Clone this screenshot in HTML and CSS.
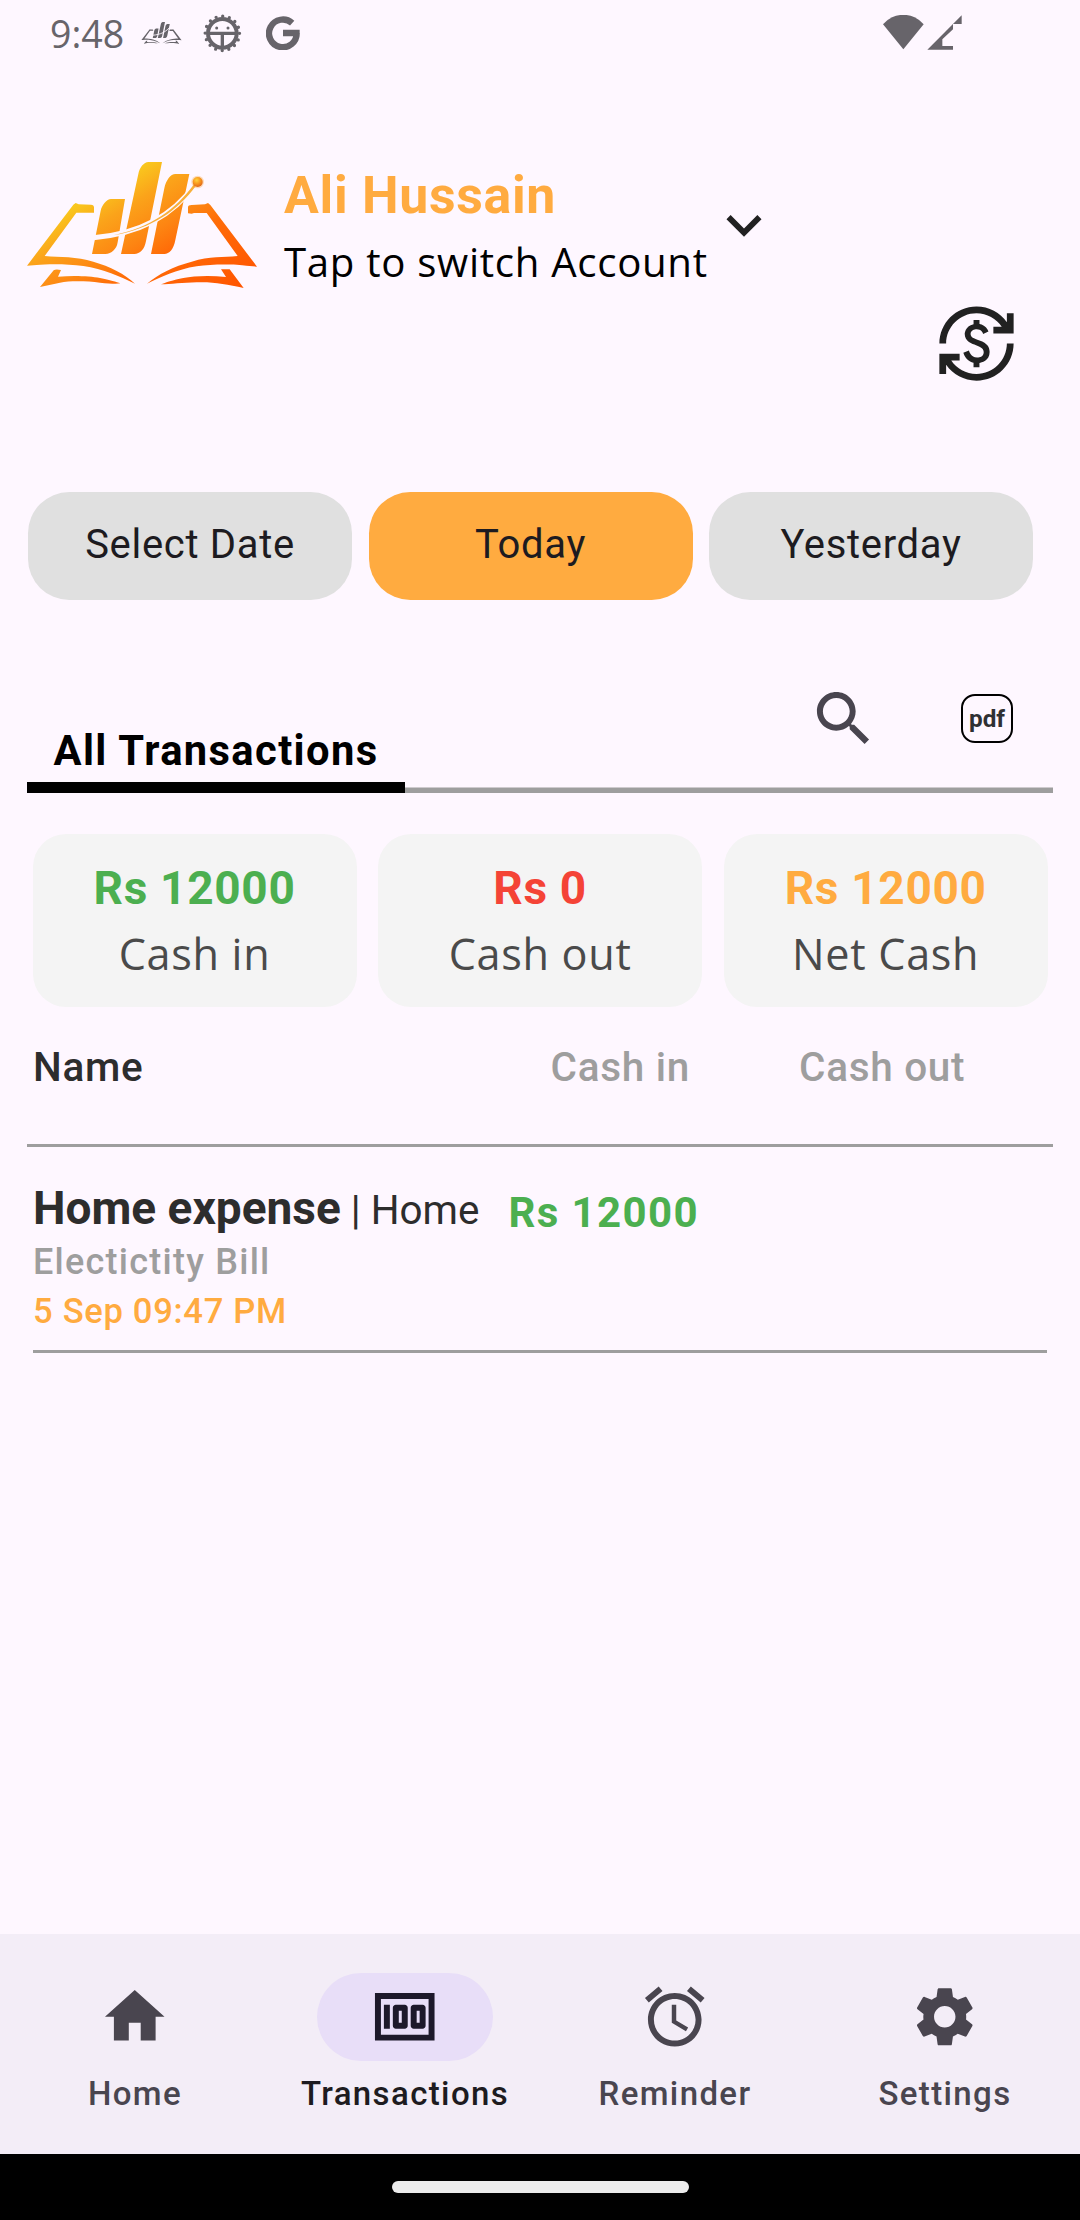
FILE: index.html
```
<!DOCTYPE html>
<html lang="en">
<head>
<meta charset="utf-8">
<title>Transactions</title>
<link rel="stylesheet" href="styles.css">
</head>
<body>
<svg class="defs" aria-hidden="true">
  <defs>
    <linearGradient id="flame" gradientUnits="userSpaceOnUse" x1="195" y1="180" x2="439" y2="587">
      <stop offset="0" stop-color="#f9c81e"/>
      <stop offset=".18" stop-color="#fba31a"/>
      <stop offset=".4" stop-color="#fd8512"/>
      <stop offset=".55" stop-color="#ff6c08"/>
      <stop offset="1" stop-color="#ff5400"/>
    </linearGradient>
    <radialGradient id="ball" cx=".4" cy=".32" r=".7">
      <stop offset="0" stop-color="#ffd23c"/>
      <stop offset=".5" stop-color="#f99a1c"/>
      <stop offset="1" stop-color="#e0641a"/>
    </radialGradient>
    <g id="book">
      <path d="M51 362 190 179l7-5 9 4 37 1q9 1 9 8v16h-53L104 333c46 4 96 1 146 17 50 14 95 37 125 66-45-21-95-45-155-53-50-7-110-6-140-3z"/>
      <path d="M741 365 601 180l-7-6-9 4-40 2q-11 0-11 7v18l11 1 7-2h38l93 129c-43 4-83 0-138 17-55 14-100 37-134 66 39-18 89-43 149-52 50-8 120-6 149-2z"/>
      <path d="m90 426 41-50q6-5 22-1l-9 20c46-4 96-2 126 4s50 12 61 16c-11 2-31 1-61-2-40-5-90-6-120 0z"/>
      <path d="m701 429-42-56h-26l15 23c-48-5-98-3-128 3s-55 14-67 19c27 0 67-5 107-6 50-2 90 6 141 17z"/>
      <path d="m246 327 26-130c4-17 18-35 31-35h42l-22 130c-3 20-18 35-37 35z"/>
      <path d="m333 327 52-240c3-19 17-36 30-36h41l-48 237c-4 24-18 39-35 39z"/>
      <path d="m423 327 40-197c5-25 19-43 33-43h42l-42 198c-5 27-18 42-33 42z"/>
    </g>
  </defs>
</svg>

<div class="screen">
  <div class="status">
    <span class="clock">9:48</span>
    <svg class="st-book" viewBox="51 51 690 378" fill="currentColor"><use href="#book"/><path class="cut" d="M250 278C370 268 480 225 555 118"/></svg>
    <svg class="st-bug" viewBox="0 0 116 116" fill="none" stroke="currentColor">
      <circle cx="58" cy="58" r="51.500" stroke-width="10" pathLength="160" stroke-dasharray="0 10" stroke-linecap="round"/>
      <circle cx="58" cy="58" r="43" stroke-width="12"/>
      <path d="M14 58h88M58 58v44" stroke-width="10"/>
      <circle cx="41" cy="42" r="4.500" fill="currentColor" stroke="none"/>
      <circle cx="75" cy="42" r="4.500" fill="currentColor" stroke="none"/>
    </svg>
    <svg class="st-g" viewBox="0 0 102 102" fill="none" stroke="currentColor" stroke-width="19">
      <path d="M78.500 21.500A41.500 41.500 0 1 0 92 51M51 51h50"/>
    </svg>
    <svg class="st-net" viewBox="0 0 236 105" fill="currentColor">
      <path d="M0 28a79.400 79.400 0 0 1 122 0L61 103z"/>
      <path d="M133 104 236 1v26h-26v16l-32 30v20h32v11z"/>
    </svg>
  </div>

  <header class="account">
    <svg class="logo" viewBox="0 0 810 480" fill="url(#flame)">
      <use href="#book"/>
      <path class="cut" d="M250 278C370 268 480 225 555 118"/>
      <path d="M310 271C425 246 495 195 552 118l6 4C500 199 430 248 310 271z" fill="#f8b03a"/>
      <circle cx="563" cy="111" r="19" fill="#f99a1c" opacity=".3"/>
      <circle cx="563" cy="111" r="15" fill="url(#ball)"/>
    </svg>
    <div class="who">
      <div class="who-name">Ali Hussain</div>
      <div class="who-hint">Tap to switch Account</div>
    </div>
    <svg class="chevron" viewBox="0 0 24 24"><path d="M7.410 8.590 12 13.170l4.590-4.580L18 10l-6 6-6-6z"/></svg>
  </header>

  <div class="currency">
    <svg viewBox="0 0 24 24"><path d="M12.890 11.100c-1.780-.59-2.640-.96-2.640-1.900 0-1.020 1.110-1.390 1.810-1.390 1.310 0 1.790.99 1.900 1.340l1.580-.67c-.15-.44-.82-1.910-2.660-2.230V5h-1.750v1.260c-2.600.56-2.620 2.850-2.620 2.960 0 2.270 2.250 2.910 3.350 3.310 1.580.56 2.280 1.070 2.280 2.030 0 1.130-1.050 1.610-1.980 1.610-1.820 0-2.340-1.870-2.400-2.090l-1.660.67c.63 2.190 2.280 2.780 3.020 2.960V19h1.750v-1.240c.52-.09 3.020-.59 3.020-3.220.010-1.390-.6-2.610-3-3.440zM3 21H1v-6h6v2H4.520c1.610 2.410 4.360 4 7.480 4 4.970 0 9-4.030 9-9h2c0 6.080-4.920 11-11 11-3.720 0-7.010-1.850-9-4.670V21zm-2-9C1 5.920 5.920 1 12 1c3.720 0 7.010 1.850 9 4.670V3h2v6h-6V7h2.480C17.870 4.590 15.120 3 12 3c-4.970 0-9 4.030-9 9H1z"/></svg>
  </div>

  <div class="filters">
    <div class="filter">Select Date</div>
    <div class="filter filter-on">Today</div>
    <div class="filter">Yesterday</div>
  </div>

  <div class="toolbar">
    <div class="tab">All Transactions</div>
    <svg class="search" viewBox="0 0 24 24"><path d="M15.500 14h-.79l-.28-.27C15.410 12.590 16 11.110 16 9.500 16 5.910 13.090 3 9.500 3S3 5.910 3 9.500 5.910 16 9.500 16c1.610 0 3.090-.59 4.230-1.570l.27.28v.79l5 4.990L20.490 19l-4.990-5zm-6 0C7.010 14 5 11.990 5 9.500S7.010 5 9.500 5 14 7.010 14 9.500 11.990 14 9.500 14z"/></svg>
    <div class="pdf">pdf</div>
  </div>

  <div class="cards">
    <div class="card"><div class="amount green">Rs 12000</div><div class="caption">Cash in</div></div>
    <div class="card"><div class="amount red">Rs 0</div><div class="caption">Cash out</div></div>
    <div class="card"><div class="amount orange">Rs 12000</div><div class="caption">Net Cash</div></div>
  </div>

  <div class="thead">
    <div class="th-name">Name</div><div>Cash in</div><div>Cash out</div>
  </div>

  <div class="entry">
    <div>
      <div class="entry-title">Home expense<span class="entry-cat"> | Home</span></div>
      <div class="entry-note">Electictity Bill</div>
      <div class="entry-date">5 Sep 09:47 PM</div>
    </div>
    <div class="entry-in green">Rs 12000</div>
  </div>

  <nav class="nav">
    <div class="nav-item">
      <div class="pill"><svg viewBox="0 0 24 24"><path d="M10 20v-6h4v6h5v-8h3L12 3 2 12h3v8z"/></svg></div>
      <div class="nav-label">Home</div>
    </div>
    <div class="nav-item nav-on">
      <div class="pill"><svg viewBox="0 0 24 24"><path d="M5 8h2v8H5zm7 0H9c-.55 0-1 .45-1 1v6c0 .55.45 1 1 1h3c.55 0 1-.45 1-1V9c0-.55-.45-1-1-1zm-1 6h-1v-4h1v4zm7-6h-3c-.55 0-1 .45-1 1v6c0 .55.45 1 1 1h3c.55 0 1-.45 1-1V9c0-.55-.45-1-1-1zm-1 6h-1v-4h1v4z"/><path d="M2 4v16h20V4H2zm2 14V6h16v12H4z"/></svg></div>
      <div class="nav-label">Transactions</div>
    </div>
    <div class="nav-item">
      <div class="pill"><svg viewBox="0 0 24 24"><path d="M22 5.720l-4.600-3.860-1.290 1.530 4.600 3.860L22 5.720zM7.880 3.390 6.600 1.860 2 5.710l1.290 1.530 4.590-3.850zM12.500 8H11v6l4.750 2.850.75-1.230-4-2.370V8zM12 4c-4.970 0-9 4.030-9 9s4.020 9 9 9c4.970 0 9-4.030 9-9s-4.030-9-9-9zm0 16c-3.870 0-7-3.130-7-7s3.130-7 7-7 7 3.130 7 7-3.130 7-7 7z"/></svg></div>
      <div class="nav-label">Reminder</div>
    </div>
    <div class="nav-item">
      <div class="pill"><svg viewBox="0 0 24 24"><path d="M19.140 12.940c.04-.3.06-.61.06-.94 0-.32-.02-.64-.07-.94l2.030-1.580c.18-.14.23-.41.12-.61l-1.920-3.320c-.12-.22-.37-.29-.59-.22l-2.390.96c-.5-.38-1.030-.7-1.620-.94l-.36-2.540c-.04-.24-.24-.41-.48-.41h-3.840c-.24 0-.43.17-.47.41l-.36 2.540c-.59.24-1.130.57-1.620.94l-2.390-.96c-.22-.08-.47 0-.59.22L2.740 8.870c-.12.21-.08.47.12.61l2.030 1.580c-.05.3-.09.63-.09.94s.02.64.07.94l-2.030 1.580c-.18.14-.23.41-.12.61l1.920 3.320c.12.22.37.29.59.22l2.390-.96c.5.38 1.030.7 1.620.94l.36 2.540c.05.24.24.41.48.41h3.840c.24 0 .44-.17.47-.41l.36-2.540c.59-.24 1.130-.56 1.620-.94l2.390.96c.22.08.47 0 .59-.22l1.920-3.320c.12-.22.07-.47-.12-.61l-2.010-1.580zM12 15.600c-1.980 0-3.600-1.620-3.600-3.600s1.620-3.600 3.600-3.600 3.600 1.620 3.600 3.600-1.620 3.600-3.600 3.600z"/></svg></div>
      <div class="nav-label">Settings</div>
    </div>
  </nav>
  <div class="gesture"><div class="handle"></div></div>
</div>
</body>
</html>
```
FILE: styles.css
```
* { box-sizing: border-box; }

body {
  margin: 0;
  background: #fef7ff;
  font-family: Roboto, "Liberation Sans", sans-serif;
  color: #1d1b20;
}

svg { display: block; flex: none; }
.defs { width: 0; height: 0; }
.cut { fill: none; stroke: #fef7ff; stroke-width: 15; }

.screen {
  display: flex;
  flex-direction: column;
  width: 1080px;
  height: 2220px;
  white-space: nowrap;
}

.green { color: #4caf50; }
.red { color: #f44336; }
.orange { color: #ffab40; }

/* status bar */
.status {
  display: flex;
  align-items: flex-start;
  height: 68px;
  padding-left: 50px;
  color: #67646a;
}
.clock {
  width: 91px;
  padding-top: 8px;
  font: 400 37.5px/52px "Open Sans", sans-serif;
}
.st-book { width: 41px; height: 22px; margin-top: 22px; }
.st-bug { width: 38.700px; height: 38.700px; margin: 14px 0 0 21px; }
.st-g { width: 34px; height: 34px; margin: 16.300px 0 0 24.700px; }
.st-net { width: 78.700px; height: 35px; margin: 15px 118px 0 auto; }

/* account header */
.account {
  display: flex;
  height: 158px;
  margin-top: 77px;
  padding-left: 10px;
}
.logo { width: 270px; height: 160px; }
.who { width: 429px; padding: 21px 0 0 4px; }
.who-name {
  font-size: 51.840px;
  font-weight: 700;
  line-height: 60px;
  letter-spacing: .69px;
  color: #ffab40;
}
.who-hint {
  margin-top: 8px;
  font-family: "Open Sans", sans-serif;
  font-size: 40.200px;
  line-height: 56px;
  letter-spacing: .69px;
  color: #000;
}
.chevron { width: 70px; height: 70px; margin-top: 45px; fill: #212121; }

.currency { display: flex; justify-content: flex-end; padding-right: 63px; }
.currency svg { width: 81px; height: 81px; fill: #212121; }

/* date filters */
.filters {
  display: grid;
  grid-template-columns: repeat(3, 324px);
  gap: 16.500px;
  margin-top: 107.500px;
  padding-left: 28px;
}
.filter {
  height: 108px;
  border-radius: 41.250px;
  background: #e0e0e0;
  font-size: 40px;
  line-height: 106px;
  letter-spacing: .69px;
  text-align: center;
}
.filter-on { background: #ffab40; }

/* tab row */
.toolbar {
  display: flex;
  align-items: flex-end;
  height: 193.500px;
  margin: 0 27px;
  box-shadow: inset 0 -5.500px #9e9e9e;
}
.tab {
  width: 378px;
  border-bottom: 11px solid #000;
  padding-bottom: 7px;
  font-size: 41.700px;
  font-weight: 700;
  line-height: 48px;
  letter-spacing: 1.375px;
  text-align: center;
  color: #000;
}
.search { width: 71.500px; height: 71.500px; margin: 0 0 39px 403px; fill: #49454f; }
.pdf {
  width: 52px;
  height: 49px;
  margin: 0 0 50px 81.500px;
  border: 2.750px solid #000;
  border-radius: 14px;
  font-size: 24.300px;
  font-weight: 700;
  line-height: 45px;
  text-align: center;
  color: #2f3033;
}

/* totals */
.cards {
  display: grid;
  grid-template-columns: repeat(3, 324px);
  gap: 21.600px;
  margin-top: 41px;
  padding-left: 32.500px;
}
.card {
  height: 172.800px;
  padding-top: 27.300px;
  border-radius: 33px;
  background: #f4f4f4;
  text-align: center;
}
.amount { font-size: 46px; font-weight: 700; line-height: 54px; letter-spacing: .69px; }
.caption {
  margin-top: 9px;
  font-family: "Open Sans", sans-serif;
  font-size: 43.200px;
  line-height: 60px;
  letter-spacing: .69px;
  color: #4a4a4a;
}

/* transactions table */
.thead {
  display: grid;
  grid-template-columns: 517.500px 248.500px 1fr;
  margin: 36.400px 27px 0;
  padding: 0 0 52.500px 6px;
  border-bottom: 3px solid #9e9e9e;
  font-size: 40.500px;
  font-weight: 500;
  line-height: 48px;
  letter-spacing: .69px;
  color: #9e9e9e;
}
.th-name { color: #2d2d2d; }

.entry {
  display: grid;
  grid-template-columns: 475.500px 1fr;
  margin: 34.300px 33px 0;
  padding-bottom: 15px;
  border-bottom: 3px solid #9e9e9e;
}
.entry-title { height: 54px; font-size: 46px; font-weight: 700; line-height: 54px; color: #2d2d2d; }
.entry-cat { font-size: 40.400px; font-weight: 400; line-height: 1; }
.entry-note {
  margin-top: 3.200px;
  font-size: 36px;
  font-weight: 500;
  line-height: 48px;
  letter-spacing: 1.250px;
  color: #9e9e9e;
}
.entry-date {
  margin-top: .700px;
  font-size: 34.600px;
  font-weight: 500;
  line-height: 48px;
  letter-spacing: .69px;
  color: #ffab40;
}
.entry-in {
  padding-top: 5.400px;
  font-size: 42px;
  font-weight: 700;
  line-height: 54px;
  letter-spacing: 1.375px;
}

/* bottom navigation */
.nav {
  display: grid;
  grid-template-columns: repeat(4, 1fr);
  height: 220px;
  margin-top: auto;
  padding-top: 39px;
  background: #f3edf7;
  color: #49454f;
}
.nav-item { display: flex; flex-direction: column; align-items: center; }
.pill {
  display: flex;
  align-items: center;
  justify-content: center;
  width: 176px;
  height: 88px;
  border-radius: 44px;
}
.pill svg { width: 71.500px; height: 71.500px; fill: currentColor; }
.nav-label {
  margin-top: 10.700px;
  font-size: 33px;
  font-weight: 500;
  line-height: 44px;
  letter-spacing: 1.375px;
}
.nav-on .pill { background: #e8def8; color: #1d192b; }
.nav-on .nav-label { color: #1d1b20; }

.gesture { height: 66px; padding-top: 27px; background: #000; }
.handle { width: 297px; height: 12px; margin: 0 auto; border-radius: 6px; background: #ececec; }
```
